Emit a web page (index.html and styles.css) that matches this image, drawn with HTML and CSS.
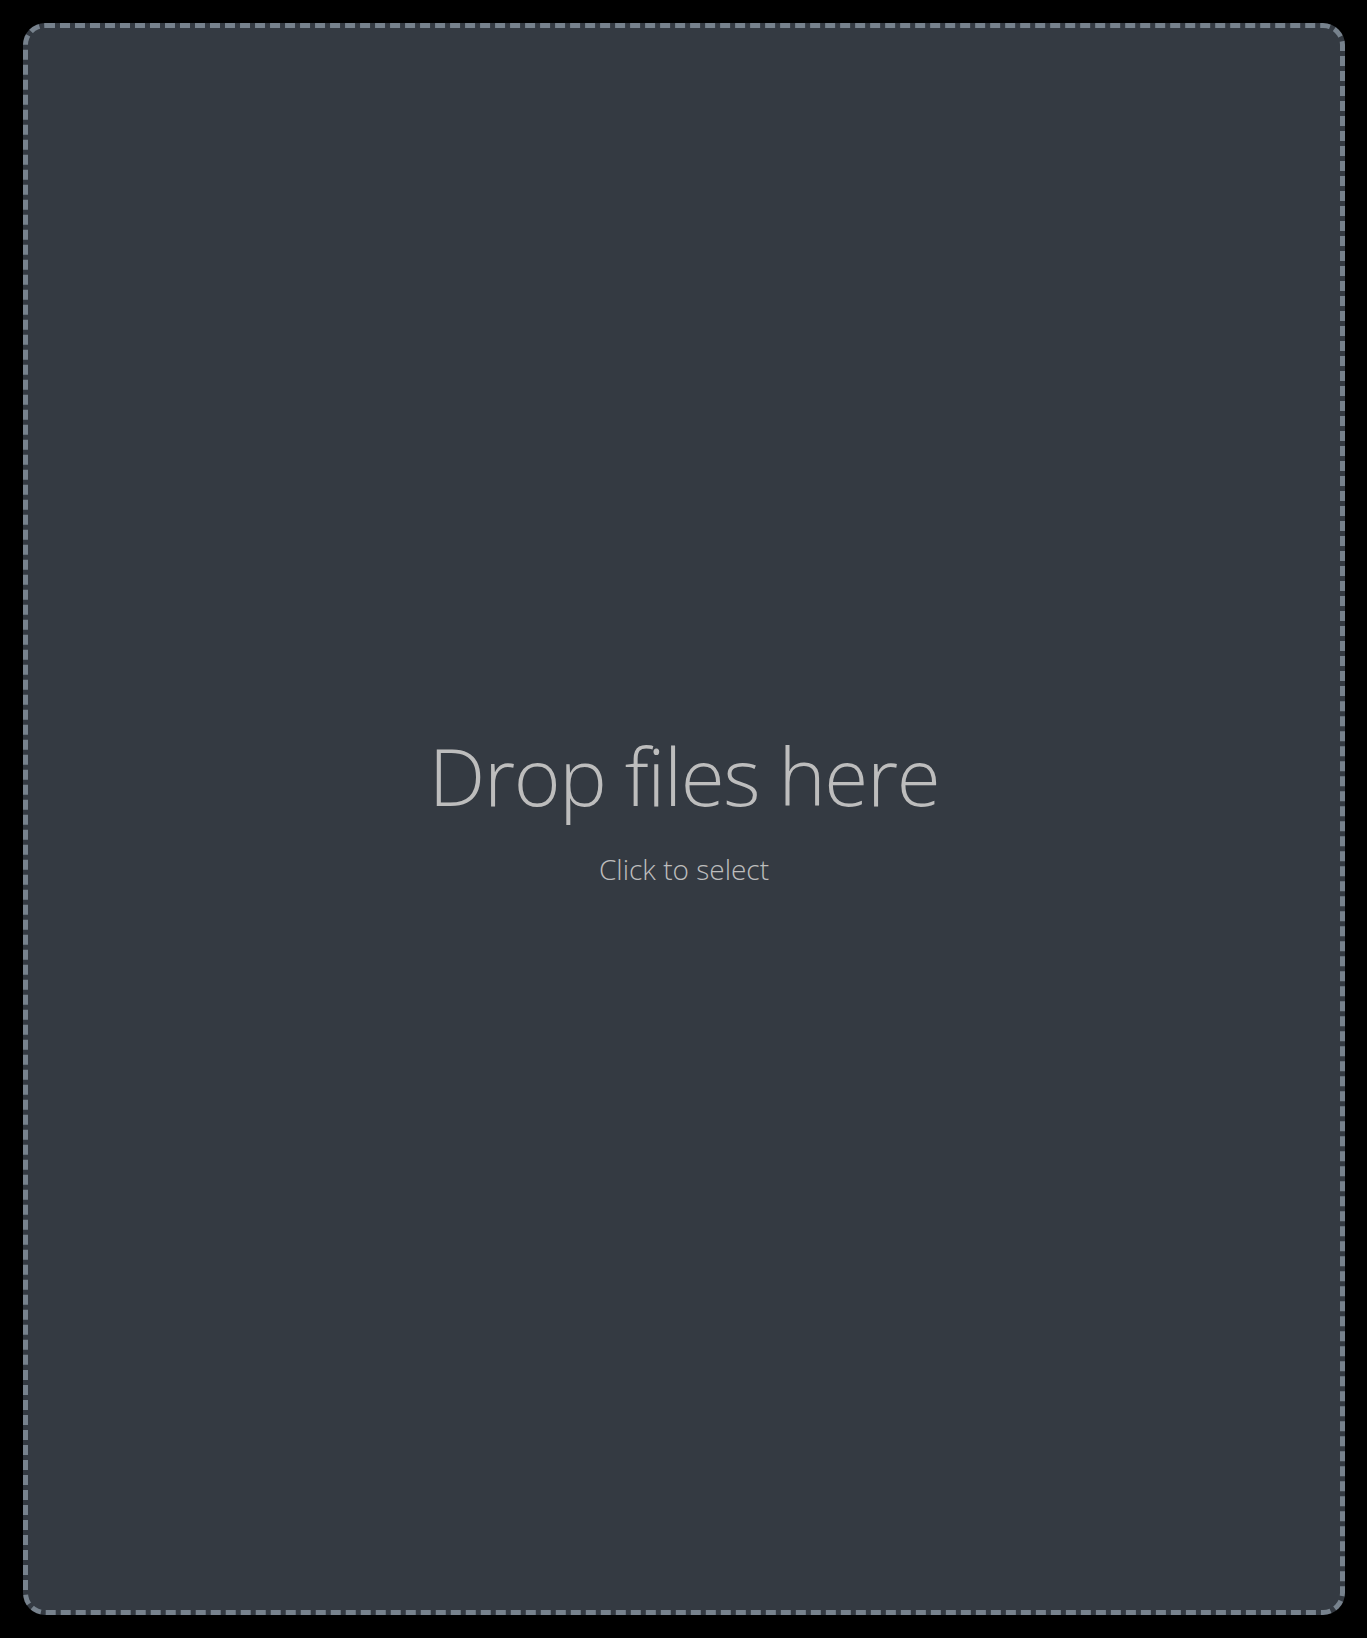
FILE: index.html
```html
<!DOCTYPE html>
<html lang="en">
<head>
<meta charset="utf-8">
<title>Drop files</title>
<link rel="stylesheet" href="styles.css">
</head>
<body>
<main class="page">
  <div class="dropzone">
    <div class="dz-title">Drop files here</div>
    <div class="dz-sub">Click to select</div>
  </div>
</main>
</body>
</html>
```

FILE: styles.css
```css
html, body {
  margin: 0;
  padding: 0;
  background: #000;
  height: 100%;
}
.page {
  box-sizing: border-box;
  height: 100vh;
  padding: 23px 22px 23px 23px;
  display: flex;
}
.dropzone {
  flex: 1;
  box-sizing: border-box;
  background: #343a42;
  border: 5px dashed #77828d;
  border-radius: 22px;
  display: flex;
  flex-direction: column;
  align-items: center;
  justify-content: center;
  padding-bottom: 24px;
  font-family: "Open Sans", "Noto Sans", sans-serif;
  font-weight: 300;
  color: #bdbdbd;
  cursor: pointer;
}
.dz-title {
  font-size: 80px;
  line-height: 1.2;
  letter-spacing: -1.4px;
}
.dz-sub {
  font-size: 28px;
  line-height: 1.3;
  margin-top: 28px;
}
```
